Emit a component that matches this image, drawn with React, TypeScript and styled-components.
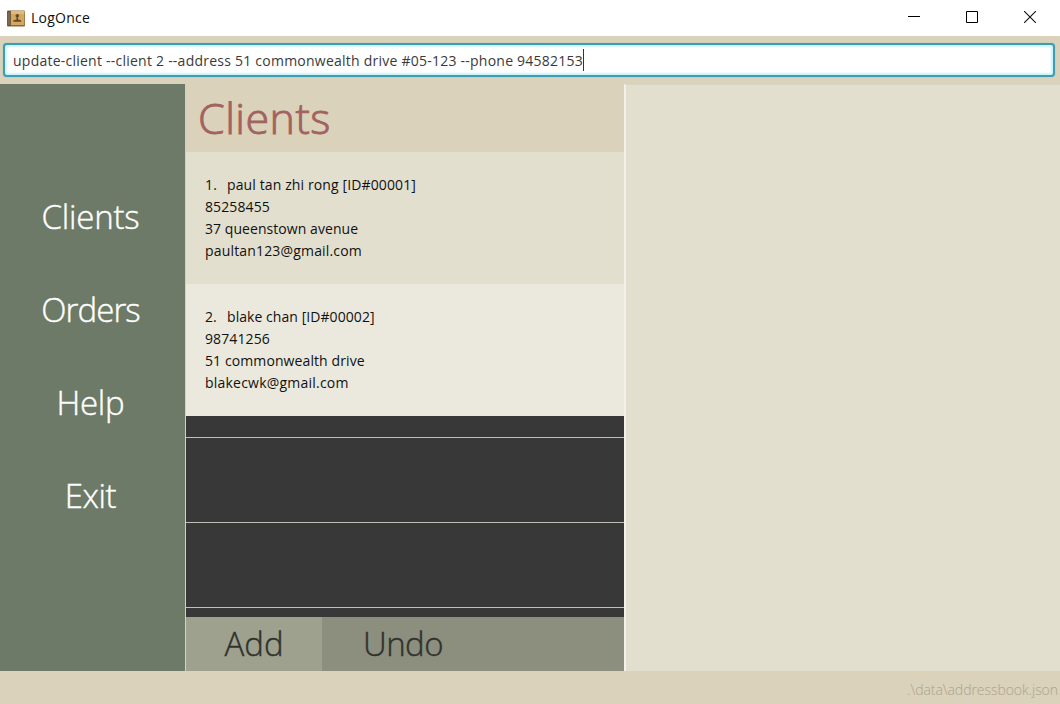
import React from 'react';
import styled, { createGlobalStyle } from 'styled-components';

const GlobalStyle = createGlobalStyle`
  * { box-sizing: border-box; }
  html, body { margin: 0; padding: 0; }
  body { font-family: "Open Sans", "Noto Sans", sans-serif; font-size: 14px; overflow: hidden; }
`;

const Window = styled.div`
  width: 1060px;
  height: 704px;
  display: flex;
  flex-direction: column;
  background: #dad2ba;
`;

const TitleBar = styled.header`
  height: 36px;
  flex: none;
  display: flex;
  align-items: center;
  background: #fff;
  padding-left: 7px;
`;

const AppName = styled.span<{ $spacing: number }>`
  flex: 1;
  padding-left: 6px;
  line-height: 36px;
  height: 36px;
  color: #111;
  letter-spacing: ${p => p.$spacing}px;
`;

const Caption = styled.div`
  display: flex;
  width: 175px;
  height: 34px;
  align-self: flex-start;
`;

const CaptionButton = styled.span<{ $width?: number }>`
  width: ${p => p.$width ?? 58}px;
  display: flex;
  align-items: center;
  justify-content: center;
`;

const CommandBar = styled.div`
  height: 48px;
  flex: none;
  padding: 7px 5px 7px 3px;
`;

const CommandBox = styled.div`
  height: 34px;
  display: flex;
  align-items: center;
  padding-left: 8px;
  background: #fff;
  border: 2px solid #3c9db5;
  border-radius: 4px;
  box-shadow: inset 0 0 2px 2px #c9f4fb, 0 0 1px 0 #57b4c6;
`;

const CommandText = styled.span`
  color: #3a3a3a;
  height: 22px;
  line-height: 24px;
  white-space: pre;
  letter-spacing: 0.237px;
`;

const Caret = styled.span`
  width: 1px;
  height: 22px;
  background: #333;
`;

const Main = styled.div`
  height: 587px;
  flex: none;
  display: flex;
`;

const Sidebar = styled.nav`
  width: 186px;
  flex: none;
  background: #6d7a67;
  border-right: 1px solid #cdd2c3;
  display: flex;
  flex-direction: column;
  align-items: center;
  padding: 86px 4px 0 0;
`;

const NavItem = styled.a<{ $spacing: number }>`
  height: 93px;
  line-height: 93px;
  font-size: 33px;
  font-weight: 300;
  -webkit-text-stroke: 0.4px #fff;
  color: #fff;
  letter-spacing: ${p => p.$spacing}px;
`;

const ListPanel = styled.section`
  width: 438px;
  flex: none;
  display: flex;
  flex-direction: column;
`;

const Heading = styled.h1`
  margin: 0;
  height: 68px;
  flex: none;
  padding-left: 12px;
  background: #dad2ba;
  color: #a3625f;
  font-size: 43px;
  font-weight: 300;
  -webkit-text-stroke: 0.9px #a3625f;
  line-height: 67px;
  letter-spacing: 0.45px;
`;

const Card = styled.article<{ $alt?: boolean }>`
  height: 132px;
  flex: none;
  padding: 22px 19px;
  background: ${p => (p.$alt ? '#ebe8dd' : '#e3dfcf')};
`;

const CardLine = styled.div<{ $spacing: number }>`
  display: flex;
  height: 22px;
  line-height: 22px;
  color: #111;
  white-space: pre;
  letter-spacing: ${p => p.$spacing}px;
`;

const Index = styled.span`
  width: 22px;
`;

const EmptyRow = styled.div<{ $height: number }>`
  height: ${p => p.$height}px;
  flex: none;
  background: #383838;
  border-bottom: 1px solid #bfc0b8;
`;

const EmptyTail = styled.div`
  flex: 1;
  background: #383838;
`;

const Actions = styled.div`
  height: 54px;
  flex: none;
  display: flex;
  background: #8c8e7e;
`;

const Action = styled.button<{ $width: number; $active?: boolean; $spacing: number }>`
  width: ${p => p.$width}px;
  height: 54px;
  padding: 0;
  border: 0;
  background: ${p => (p.$active ? '#9fa18f' : 'transparent')};
  color: #30322e;
  font: 300 33px/54px "Open Sans", "Noto Sans", sans-serif;
  -webkit-text-stroke: 0.4px #30322e;
  letter-spacing: ${p => p.$spacing}px;
`;

const DetailPanel = styled.section`
  flex: 1;
  background: #e3dfcf;
  border-left: 2px solid #f3f1e9;
  border-top: 1px solid #d9d4c4;
`;

const StatusBar = styled.footer`
  flex: 1;
  text-align: right;
  padding: 8px 2px 0 0;
  line-height: 22px;
  font-weight: 300;
  color: #aaa48f;
  letter-spacing: -0.05px;
`;

const BookIcon = () => (
  <svg width="18" height="17" viewBox="0 0 18 17">
    <rect x="0" y="0.5" width="18" height="16" rx="1" fill="#8b6a38" />
    <rect x="4" y="1" width="13.3" height="14" fill="#d2a762" />
    <rect x="4" y="1" width="13.3" height="3" fill="#e0bb7c" />
    <rect x="0.5" y="1" width="3" height="15" fill="#5e4c3c" />
    <rect x="1.5" y="2" width="1" height="13" fill="#97856c" />
    <circle cx="10.3" cy="5.8" r="1.8" fill="#664a28" />
    <path d="M9.5 7h1.6v2.6l3 .7v1.4H6.4v-1.4l3.1-.7z" fill="#664a28" />
  </svg>
);

const nav = [
  { label: 'Clients', spacing: -0.2 },
  { label: 'Orders', spacing: -0.9 },
  { label: 'Help', spacing: -0.3 },
  { label: 'Exit', spacing: -0.4 },
];

const clients = [
  {
    name: ['paul tan zhi rong [ID#00001]', 0.12],
    lines: [['85258455', 0.1], ['37 queenstown avenue', 0.06], ['paultan123@gmail.com', 0.17]],
  },
  {
    name: ['blake chan [ID#00002]', 0.06],
    lines: [['98741256', 0.1], ['51 commonwealth drive', 0.1], ['blakecwk@gmail.com', 0.22]],
  },
] as { name: [string, number]; lines: [string, number][] }[];

export default function App() {
  return (
    <Window>
      <GlobalStyle />
      <TitleBar>
        <BookIcon />
        <AppName $spacing={0.25}>LogOnce</AppName>
        <Caption>
          <CaptionButton>
            <svg width="12" height="12" viewBox="0 0 12 12"><path d="M0 5.5h12" stroke="#000" /></svg>
          </CaptionButton>
          <CaptionButton>
            <svg width="12" height="12" viewBox="0 0 12 12"><path d="M.5.5h11v11H.5z" fill="none" stroke="#000" /></svg>
          </CaptionButton>
          <CaptionButton $width={60}>
            <svg width="12" height="12" viewBox="0 0 12 12"><path d="M0 0l12 12M12 0L0 12" stroke="#111" strokeWidth="1.1" /></svg>
          </CaptionButton>
        </Caption>
      </TitleBar>
      <CommandBar>
        <CommandBox>
          <CommandText>update-client --client 2 --address 51 commonwealth drive #05-123 --phone 94582153</CommandText>
          <Caret />
        </CommandBox>
      </CommandBar>
      <Main>
        <Sidebar>
          {nav.map(n => <NavItem key={n.label} $spacing={n.spacing}>{n.label}</NavItem>)}
        </Sidebar>
        <ListPanel>
          <Heading>Clients</Heading>
          {clients.map((c, i) => (
            <Card key={c.name[0]} $alt={i % 2 === 1}>
              <CardLine $spacing={c.name[1]}><Index>{i + 1}.</Index>{c.name[0]}</CardLine>
              {c.lines.map(([text, spacing]) => <CardLine key={text} $spacing={spacing}>{text}</CardLine>)}
            </Card>
          ))}
          <EmptyRow $height={22} />
          <EmptyRow $height={85} />
          <EmptyRow $height={85} />
          <EmptyTail />
          <Actions>
            <Action $width={136} $active $spacing={0}>Add</Action>
            <Action $width={162} $spacing={-0.6}>Undo</Action>
          </Actions>
        </ListPanel>
        <DetailPanel />
      </Main>
      <StatusBar>.\data\addressbook.json</StatusBar>
    </Window>
  );
}
